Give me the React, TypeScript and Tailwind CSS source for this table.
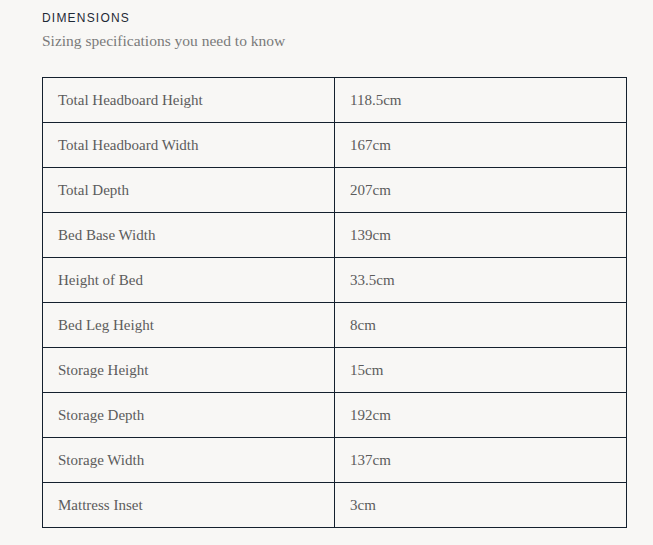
import React from 'react';

const rows: [string, string][] = [
  ['Total Headboard Height', '118.5cm'],
  ['Total Headboard Width', '167cm'],
  ['Total Depth', '207cm'],
  ['Bed Base Width', '139cm'],
  ['Height of Bed', '33.5cm'],
  ['Bed Leg Height', '8cm'],
  ['Storage Height', '15cm'],
  ['Storage Depth', '192cm'],
  ['Storage Width', '137cm'],
  ['Mattress Inset', '3cm'],
];

const App: React.FC = () => {
  return (
    <div className="min-h-[545px] w-full bg-[#f8f7f5] pl-[42px] pr-[26px] pt-[10px]">
      <h3 className="font-['Liberation_Sans',sans-serif] text-[12px] leading-[16px] tracking-[0.1em] text-[#1f2a36]">
        DIMENSIONS
      </h3>
      <p className="mt-[5px] font-['Liberation_Serif',serif] text-[15.5px] leading-[20px] text-[#7a7a7a]">
        Sizing specifications you need to know
      </p>

      <table className="mt-[26px] w-[585px] border-collapse font-['Liberation_Serif',serif] text-[15px] text-[#5c5c5c]">
        <tbody>
          {rows.map(([label, value]) => (
            <tr key={label} className="h-[45px]">
              <td className="w-[292px] border border-[#14202e] px-[15px] align-middle">{label}</td>
              <td className="border border-[#14202e] px-[15px] align-middle">{value}</td>
            </tr>
          ))}
        </tbody>
      </table>
    </div>
  );
};

export default App;
